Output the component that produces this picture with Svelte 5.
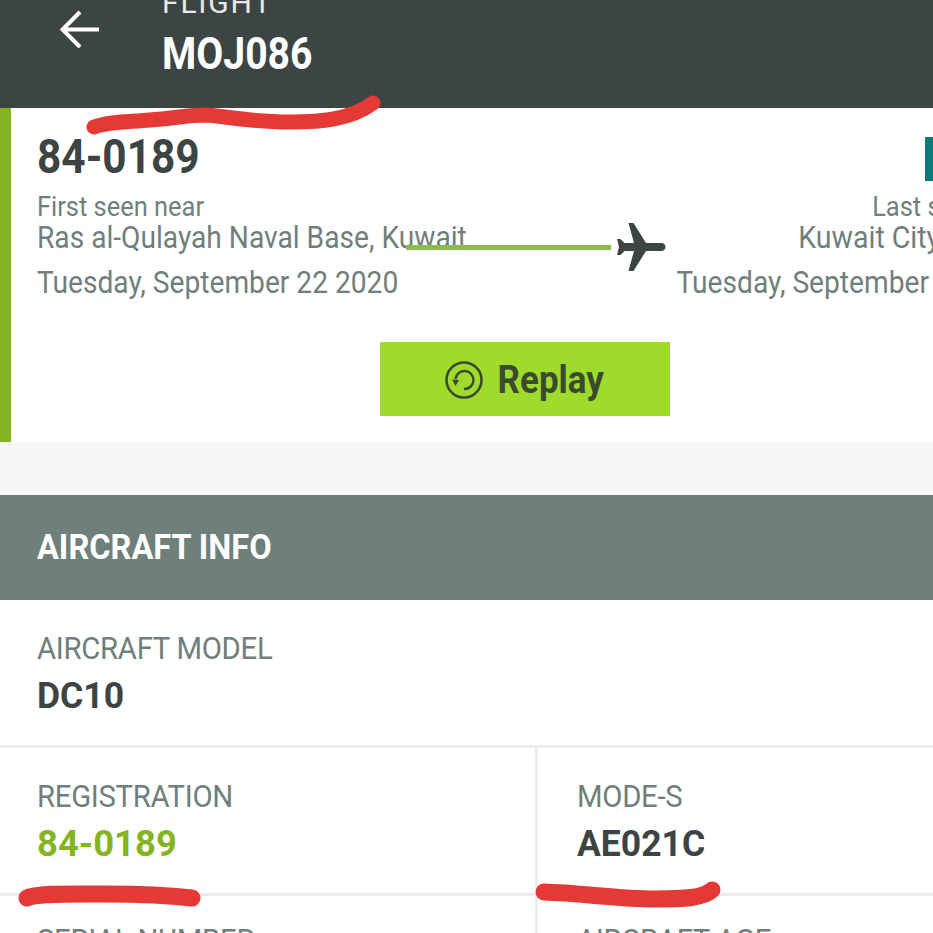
<script>
	const facts = [
		{ label: 'REGISTRATION', value: '84-0189', link: true },
		{ label: 'MODE-S', value: 'AE021C' }
	];
</script>

<div class="page">
	<header class="topbar">
		<svg class="back" viewBox="0 0 40 38" width="40" height="38" aria-hidden="true">
			<path d="M39 19.500H3M20 2 2.500 19.500 20 37" fill="none" stroke="#fff" stroke-width="4" />
		</svg>
		<div class="title">
			<div class="kicker">FLIGHT</div>
			<div class="callsign">MOJ086</div>
		</div>
	</header>

	<section class="flight">
		<div class="route">
			<div class="end">
				<h2>84-0189</h2>
				<p class="seen">First seen near</p>
				<p class="place">Ras al-Qulayah Naval Base, Kuwait</p>
				<p class="date">Tuesday, September 22 2020</p>
			</div>
			<div class="end right">
				<div class="tag"></div>
				<p class="seen">Last seen near</p>
				<p class="place">Kuwait City, Kuwait</p>
				<p class="date">Tuesday, September 22 2020</p>
			</div>
			<div class="track">
				<div class="line"></div>
				<svg viewBox="0 0 50 50" width="50" height="50" aria-hidden="true">
					<path fill="#3c4444" d="M49.500 25C49.500 22.500 47.500 21 45 21H30L17.500 1H12.500L18 21H8.500L4.500 17H1L3 25 1 33H4.500L8.500 29H18L12.500 49H17.500L30 29H45C47.500 29 49.500 27.500 49.500 25Z" />
				</svg>
			</div>
		</div>
		<button class="replay">
			<svg viewBox="0 0 38 38" width="38" height="38" aria-hidden="true">
				<circle cx="19" cy="19" r="17.500" fill="none" stroke="#3c4a2c" stroke-width="2.600" />
				<path d="M19 28A9 9 0 1 0 10.500 18" fill="none" stroke="#3c4a2c" stroke-width="2.400" />
				<path d="M7 18.500 14 19 10.500 25Z" fill="#3c4a2c" />
			</svg>
			<span>Replay</span>
		</button>
	</section>

	<section class="info">
		<h3><span>AIRCRAFT INFO</span></h3>
		<div class="cell">
			<div class="label">AIRCRAFT MODEL</div>
			<div class="value">DC10</div>
		</div>
		<div class="pair">
			{#each facts as fact}
				<div class="cell">
					<div class="label">{fact.label}</div>
					<div class="value" class:link={fact.link}>{fact.value}</div>
				</div>
			{/each}
		</div>
		<div class="pair last">
			<div class="cell">
				<div class="label">SERIAL NUMBER</div>
			</div>
			<div class="cell">
				<div class="label">AIRCRAFT AGE</div>
			</div>
		</div>
	</section>

	<svg class="marks" viewBox="0 0 933 933" width="933" height="933" aria-hidden="true">
		<g fill="none" stroke="#e53935" stroke-linecap="round" stroke-linejoin="round">
			<path stroke-width="15" d="M94 127C110 121 130 122 150 120C175 118 190 115 205 115C225 116 250 122 290 122C320 122 350 120 373 103" />
			<path stroke-width="17" d="M27 898C36 893 70 894 107 894C140 894 165 895 192 898" />
			<path stroke-width="17" d="M544 892C580 893 620 899 655 899C685 899 703 898 712 890" />
		</g>
	</svg>
</div>

<style>
	:global(body) {
		margin: 0;
		background: #f7f7f7;
	}
	.page {
		position: relative;
		width: 933px;
		height: 933px;
		overflow: hidden;
		font-family: 'Roboto', 'Liberation Sans', sans-serif;
		color: #3c4444;
	}
	p,
	h2,
	h3 {
		margin: 0;
		font-weight: inherit;
	}
	.topbar {
		display: flex;
		align-items: flex-end;
		gap: 62px;
		height: 108px;
		padding: 0 0 32px 60px;
		box-sizing: border-box;
		background: #3c4444;
		color: #fff;
		overflow: hidden;
	}
	.back {
		margin-bottom: 28px;
	}
	.kicker {
		font-size: 30px;
		line-height: 30px;
		letter-spacing: 1.8px;
		color: #e6e9e8;
		margin-bottom: 14px;
	}
	.callsign {
		font-size: 44px;
		line-height: 44px;
		font-weight: 700;
		transform: scaleX(0.89);
		transform-origin: left;
	}
	.flight {
		display: flex;
		flex-direction: column;
		height: 334px;
		box-sizing: border-box;
		border-left: 11px solid #85b422;
		background: #fff;
		padding: 24px 0 0 26px;
	}
	.route {
		position: relative;
		display: flex;
		justify-content: space-between;
		width: 1001px;
		height: 210px;
		flex: none;
	}
	.end {
		color: #6f7f7c;
		font-size: 31px;
	}
	.end h2 {
		font-size: 49px;
		line-height: 50px;
		font-weight: 700;
		color: #3c4444;
		margin-bottom: 10px;
		transform: scaleX(0.865);
		transform-origin: left;
	}
	.end p {
		white-space: nowrap;
		transform: scaleX(0.908);
		transform-origin: left;
	}
	.right p {
		transform-origin: right;
	}
	.right .place {
		transform: scaleX(0.92);
	}
	.seen {
		font-size: 28px;
		line-height: 30px;
	}
	.place {
		line-height: 32px;
	}
	.date {
		line-height: 34px;
		margin-top: 12px;
	}
	.right {
		text-align: right;
	}
	.tag {
		width: 113px;
		height: 44px;
		margin: 5px 0 11px auto;
		background: #0e7a78;
	}
	.track {
		position: absolute;
		left: 369px;
		top: 90px;
		display: flex;
		align-items: center;
		gap: 5px;
	}
	.line {
		width: 205px;
		height: 5px;
		background: #8bbb4f;
	}
	.track svg {
		flex: none;
	}
	.replay {
		display: flex;
		align-items: center;
		justify-content: center;
		gap: 14px;
		align-self: flex-start;
		width: 290px;
		height: 74px;
		margin: 0 0 0 343px;
		padding: 2px 0 0;
		border: none;
		background: #9fdb2d;
		color: #3c4a2c;
		font-family: inherit;
		font-size: 38px;
		font-weight: 700;
	}
	.replay span {
		transform: scaleX(0.92);
		margin: 0 -4px;
	}
	.info {
		margin-top: 53px;
		background: #fff;
	}
	.info h3 {
		height: 105px;
		box-sizing: border-box;
		padding-left: 37px;
		background: #6f7f7a;
		color: #fff;
		font-size: 35px;
		line-height: 105px;
		font-weight: 700;
	}
	.info h3 span {
		display: inline-block;
		transform: scaleX(0.93);
		transform-origin: left;
	}
	.pair {
		display: grid;
		grid-template-columns: 535px 1fr;
	}
	.cell {
		height: 148px;
		box-sizing: border-box;
		padding: 30px 0 0 37px;
		border-bottom: 3px solid #ececec;
	}
	.pair .cell:nth-child(2) {
		border-left: 3px solid #ececec;
		padding-left: 39px;
	}
	.last .cell {
		padding-top: 26px;
	}
	.label,
	.value {
		transform-origin: left;
	}
	.label {
		font-size: 31px;
		line-height: 38px;
		color: #6f7f7c;
		letter-spacing: -0.3px;
		transform: scaleX(0.945);
	}
	.value {
		font-size: 37px;
		line-height: 46px;
		margin-top: 5px;
		font-weight: 700;
		color: #3c4444;
		transform: scaleX(0.96);
	}
	.value.link {
		color: #85b422;
		transform: scaleX(0.985);
	}
	.marks {
		position: absolute;
		left: 0;
		top: 0;
		pointer-events: none;
	}
</style>
